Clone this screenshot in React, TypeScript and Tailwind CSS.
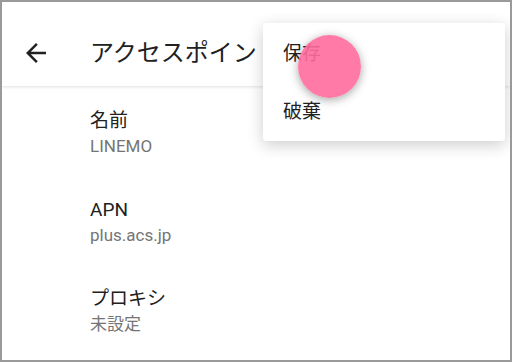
const font = "font-['Roboto','Noto_Sans_CJK_JP',sans-serif]";

type Field = { label: string; value: string };

const fields: Field[] = [
  { label: "名前", value: "LINEMO" },
  { label: "APN", value: "plus.acs.jp" },
  { label: "プロキシ", value: "未設定" },
];

function BackArrow() {
  return (
    <svg width="30" height="30" viewBox="0 0 24 24" fill="#212121">
      <path d="M20 11H7.83l5.59-5.59L12 4l-8 8 8 8 1.41-1.41L7.83 13H20v-2z" />
    </svg>
  );
}

export default function App() {
  return (
    <div className={`relative h-[362px] w-[512px] overflow-hidden border-2 border-[#9a9a9a] bg-white ${font}`}>
      <header className="relative z-10 flex h-[84px] items-center bg-white pl-[19px] pt-[18px] shadow-[0_1px_3px_rgba(0,0,0,0.12)]">
        <BackArrow />
        <h1 className="ml-[39px] whitespace-nowrap text-[24px] leading-[32px] text-[#212121]">
          アクセスポイントの編集
        </h1>
      </header>

      <ul className="pt-[22px]">
        {fields.map((f) => (
          <li key={f.label} className="h-[89px] pl-[88px]">
            <p className="text-[19px] leading-[26px] text-[#212121]">{f.label}</p>
            <p className="text-[17px] leading-[24px] text-[#757575]">{f.value}</p>
          </li>
        ))}
      </ul>

      <div className="absolute left-[261px] top-[21px] z-20 h-[118px] w-[242px] rounded-[3px] bg-white pt-[2px] shadow-[0_4px_16px_rgba(0,0,0,0.2)]">
        <div className="flex h-[58px] items-center pl-[20px] text-[19px] text-[#212121]">保存</div>
        <div className="flex h-[58px] items-center pl-[20px] text-[19px] text-[#212121]">破棄</div>
      </div>

      <div className="absolute left-[296px] top-[33px] z-30 h-[63px] w-[63px] rounded-full bg-[#ff6b9d]/90 shadow-[0_2px_10px_rgba(0,0,0,0.35)]" />
    </div>
  );
}
